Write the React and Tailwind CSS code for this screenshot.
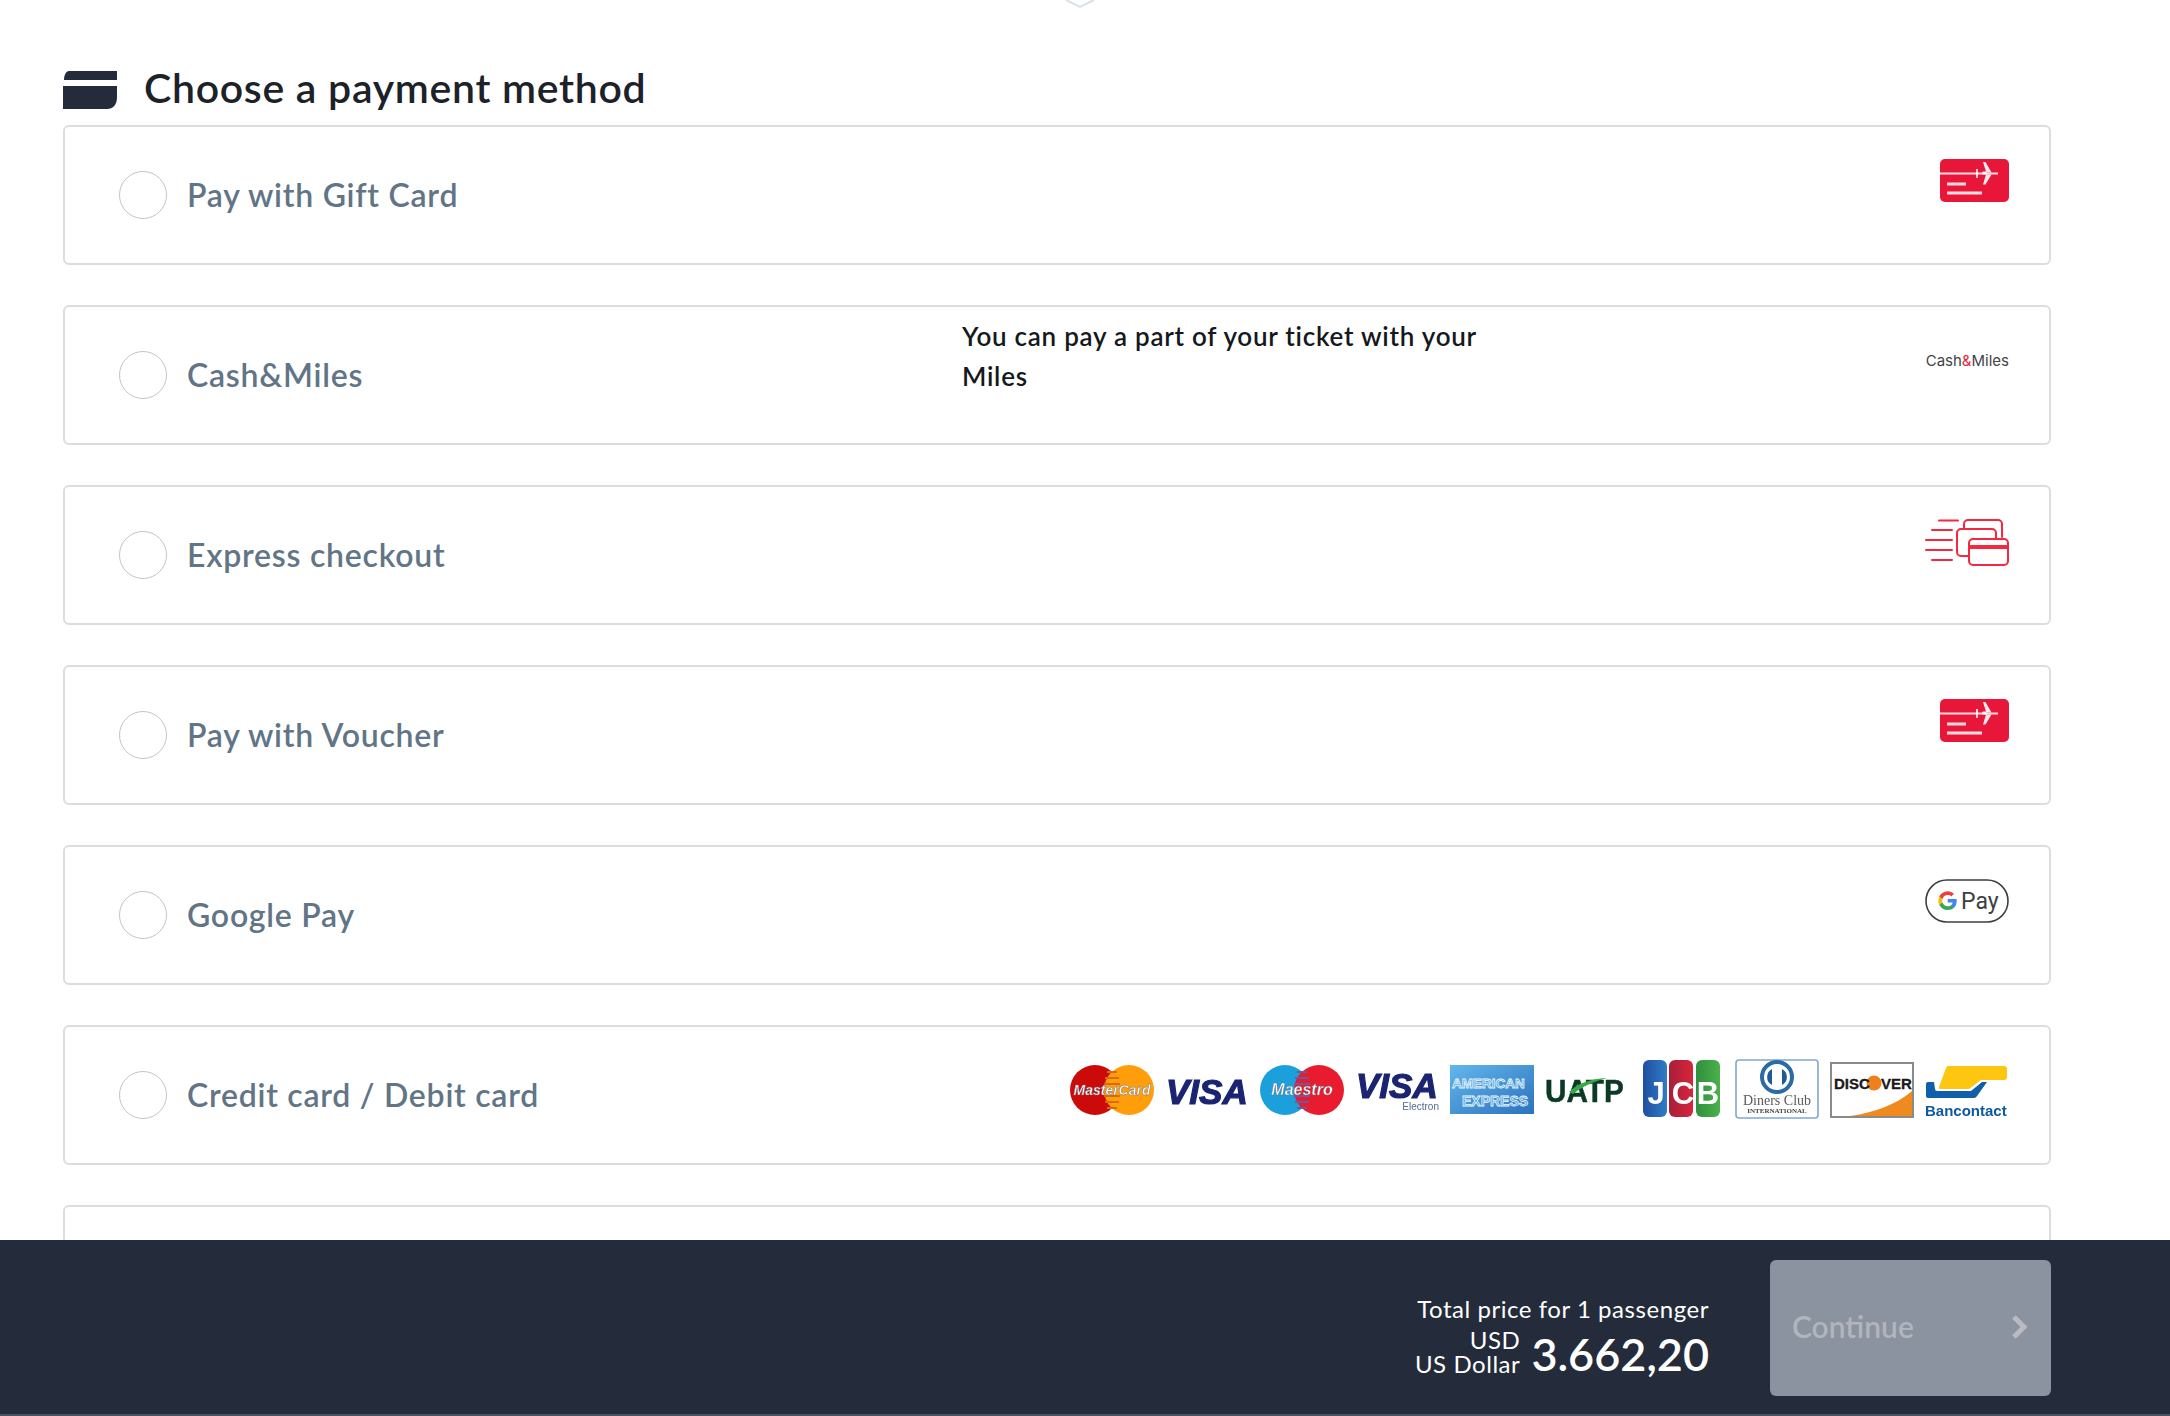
const sans = "font-['Lato','Open_Sans',sans-serif]"

const GiftIcon = () => (
  <svg width="69" height="43" viewBox="0 0 69 43" className="block blur-[0.3px]">
    <rect width="69" height="43" rx="5" fill="#e8173a" />
    <path d="M0 14.5h58" stroke="#fff" strokeOpacity=".85" strokeWidth="2" />
    <path d="M43 3h2.5l6 10.5h-5V15.500h5l-6 10H43l3-10h-3l-1-1v-1l1-1h3z" fill="#fff" fillOpacity=".9" />
    <path d="M37 10v9" stroke="#fff" strokeOpacity=".8" strokeWidth="2" />
    <path d="M7 25h19M7 34h35" stroke="#fff" strokeOpacity=".85" strokeWidth="3" />
  </svg>
)

const ExpressIcon = () => (
  <svg width="84" height="47" viewBox="0 0 84 47" className="block" fill="none" stroke="#f5283f" strokeWidth="2" strokeLinecap="round">
    <path d="M14 1.500h19M7 11h20M1 21h26M1 31h26M7 41h20" />
    <path d="M39 9V5a4 4 0 0 1 4-4h30a4 4 0 0 1 4 4v13" />
    <path d="M43 37h-7a4 4 0 0 1-4-4V14a4 4 0 0 1 4-4h31a4 4 0 0 1 4 4v5" />
    <rect x="44" y="20" width="39" height="26" rx="4" />
    <path d="M44 28h39" strokeWidth="4" strokeLinecap="butt" />
  </svg>
)

const GooglePayIcon = () => (
  <svg width="84" height="44" viewBox="0 0 84 44" className="block">
    <rect x="1" y="1" width="82" height="42" rx="21" fill="#fff" stroke="#3c4043" strokeWidth="1.6" />
    <g transform="translate(12.5 11.5) scale(.85)">
      <path fill="#4285F4" d="M22.56 12.25c0-.78-.07-1.53-.2-2.25H12v4.26h5.92c-.26 1.37-1.04 2.53-2.21 3.31v2.77h3.57c2.08-1.92 3.28-4.74 3.28-8.09z" />
      <path fill="#34A853" d="M12 23c2.97 0 5.46-.98 7.28-2.66l-3.57-2.77c-.98.66-2.23 1.06-3.71 1.06-2.86 0-5.29-1.93-6.16-4.53H2.18v2.84C3.99 20.53 7.7 23 12 23z" />
      <path fill="#FBBC05" d="M5.84 14.09c-.22-.66-.35-1.36-.35-2.09s.13-1.43.35-2.09V7.07H2.18C1.43 8.55 1 10.22 1 12s.43 3.45 1.18 4.93l2.85-2.22.81-.62z" />
      <path fill="#EA4335" d="M12 5.38c1.62 0 3.06.56 4.21 1.64l3.15-3.15C17.45 2.09 14.97 1 12 1 7.7 1 3.99 3.47 2.18 7.07l3.66 2.84c.87-2.6 3.3-4.53 6.16-4.53z" />
    </g>
    <text x="36" y="30" fontSize="23" fill="#3c4043" fontFamily="Roboto, sans-serif">Pay</text>
  </svg>
)

const logoFont = "Liberation Sans, sans-serif"

const Circles = ({ left, right, label, stripe, size }) => (
  <svg width="84" height="60" viewBox="0 0 84 60" className="block">
    <circle cx="25" cy="31" r="25" fill={left} />
    <circle cx="59" cy="31" r="25" fill={right} />
    <path d="M37 13h10M35 19h14M34 25h16M34 37h16M35 43h14M37 49h10" stroke={stripe} strokeWidth="2" />
    <text x="42" y="36" textAnchor="middle" fontSize={size} fontWeight="700" fontStyle="italic" fill="#fff" stroke="#6b6b7a" strokeWidth=".4" fontFamily={logoFont}>{label}</text>
  </svg>
)

const VisaLogo = () => (
  <svg width="84" height="60" viewBox="0 0 84 60" className="block">
    <text x="1" y="45" fontSize="35" fontWeight="700" fontStyle="italic" fill="#1b2471" stroke="#1b2471" strokeWidth="1.2" fontFamily={logoFont}>VISA</text>
  </svg>
)

const VisaElectronLogo = () => (
  <svg width="84" height="60" viewBox="0 0 84 60" className="block">
    <text x="1" y="39" fontSize="35" fontWeight="700" fontStyle="italic" fill="#1b2471" stroke="#1b2471" strokeWidth="1.2" fontFamily={logoFont}>VISA</text>
    <text x="84" y="51" textAnchor="end" fontSize="10" fill="#5a6a90" fontFamily={logoFont}>Electron</text>
  </svg>
)

const AmexLogo = () => (
  <svg width="84" height="60" viewBox="0 0 84 60" className="block">
    <defs>
      <linearGradient id="amex" x1="0" y1="0" x2="1" y2="1">
        <stop offset="0" stopColor="#63b7ec" />
        <stop offset="1" stopColor="#2b72bd" />
      </linearGradient>
    </defs>
    <rect y="6" width="84" height="49" fill="url(#amex)" />
    <text x="2" y="29" fontSize="13.500" fontWeight="700" fill="#4d9fdc" stroke="#eaf6fe" strokeWidth=".8" fontFamily={logoFont}>AMERICAN</text>
    <text x="12" y="47" fontSize="14" fontWeight="700" fill="#4d9fdc" stroke="#eaf6fe" strokeWidth=".8" fontFamily={logoFont}>EXPRESS</text>
  </svg>
)

const UatpLogo = () => (
  <svg width="84" height="60" viewBox="0 0 84 60" className="block">
    <g transform="translate(0 43) scale(.93 1)">
      <text x="0" y="0" fontSize="32" fontWeight="700" fill="#0b3a24" stroke="#0b3a24" strokeWidth=".5" fontFamily={logoFont}>UATP</text>
    </g>
    <path d="M24 33C32 25 44 20 62 19C48 23 38 27 28 35z" fill="#37a84a" />
  </svg>
)

const JcbLogo = () => (
  <svg width="84" height="60" viewBox="0 0 84 60" className="block">
    <defs>
      <linearGradient id="jb" x1="0" y1="0" x2="1" y2="0"><stop offset="0" stopColor="#1f4fa0" /><stop offset="1" stopColor="#2f7cc4" /></linearGradient>
      <linearGradient id="jr" x1="0" y1="0" x2="1" y2="0"><stop offset="0" stopColor="#a81e3c" /><stop offset="1" stopColor="#d8263a" /></linearGradient>
      <linearGradient id="jg" x1="0" y1="0" x2="1" y2="0"><stop offset="0" stopColor="#2f8f3e" /><stop offset="1" stopColor="#4cb04a" /></linearGradient>
    </defs>
    <rect x="3" y="1" width="24" height="57" rx="6" fill="url(#jb)" />
    <rect x="29" y="1" width="24" height="57" rx="6" fill="url(#jr)" />
    <rect x="56" y="1" width="24" height="57" rx="6" fill="url(#jg)" />
    <g fontSize="31" fontWeight="700" fill="#fff" fontFamily={logoFont} textAnchor="middle">
      <text x="16" y="45">J</text>
      <text x="43" y="45">C</text>
      <text x="68" y="45">B</text>
    </g>
  </svg>
)

const DinersLogo = () => (
  <svg width="84" height="60" viewBox="0 0 84 60" className="block">
    <rect x="1" y="1" width="82" height="58" rx="3" fill="#fff" stroke="#7fa9cf" strokeWidth="1.6" />
    <circle cx="42" cy="18" r="15" fill="#fff" stroke="#2a6aa6" strokeWidth="4" />
    <path d="M37 10a9 9 0 0 0 0 16zM47 10a9 9 0 0 1 0 16z" fill="#1d5c98" />
    <text x="42" y="46" textAnchor="middle" fontSize="14" fill="#5a5a5a" fontFamily="Liberation Serif, serif">Diners Club</text>
    <text x="42" y="54" textAnchor="middle" fontSize="7" fontWeight="700" fill="#444" fontFamily="Liberation Serif, serif">INTERNATIONAL</text>
  </svg>
)

const DiscoverLogo = () => (
  <svg width="84" height="60" viewBox="0 0 84 60" className="block">
    <rect x="1" y="4" width="82" height="54" fill="#fff" stroke="#8a8a8a" strokeWidth="2" />
    <path d="M20 57H82V32C66 46 42 54 20 57z" fill="#ef8a1f" />
    <circle cx="44" cy="24" r="7.500" fill="#f0801e" />
    <text x="4" y="30" fontSize="15" fontWeight="700" fill="#1a1a1a" stroke="#1a1a1a" strokeWidth=".3" fontFamily={logoFont}>DISC</text>
    <text x="51" y="30" fontSize="15" fontWeight="700" fill="#1a1a1a" stroke="#1a1a1a" strokeWidth=".3" fontFamily={logoFont}>VER</text>
  </svg>
)

const BancontactLogo = () => (
  <svg width="84" height="60" viewBox="0 0 84 60" className="block">
    <path d="M23 7H79q3 0 3 3V18q0 3-3 3H56L44 30H16q-3 0-2-2L21 9q1-2 2-2z" fill="#fdc611" />
    <path d="M1 25q0-2 2-2H9L10 30q0 2 2 2H46L57 23H62L52 37q-1 2-3 2H3q-2 0-2-2z" fill="#0f5ea8" />
    <text x="0" y="57" fontSize="15" fontWeight="700" fill="#0d5aa0" fontFamily={logoFont}>Bancontact</text>
  </svg>
)

const CardLogos = () => (
  <div className="flex gap-[11px] blur-[0.4px]">
    <Circles left="#cc0a0a" right="#ff9d0a" stripe="#d96a0a" label="MasterCard" size="14" />
    <VisaLogo />
    <Circles left="#1ba0dc" right="#e81c2e" stripe="#6a5aa0" label="Maestro" size="16" />
    <VisaElectronLogo />
    <AmexLogo />
    <UatpLogo />
    <JcbLogo />
    <DinersLogo />
    <DiscoverLogo />
    <BancontactLogo />
  </div>
)

const methods = [
  { label: "Pay with Gift Card", logo: <GiftIcon /> },
  {
    label: "Cash&Miles",
    note: "You can pay a part of your ticket with your Miles",
    logo: (
      <p className="mt-[12px] text-[15px] leading-[20px] text-[#444] font-['Inter',sans-serif]">
        Cash<span className="text-[#e8283a]">&amp;</span>Miles
      </p>
    ),
  },
  { label: "Express checkout", logo: <ExpressIcon /> },
  { label: "Pay with Voucher", logo: <GiftIcon /> },
  { label: "Google Pay", logo: <GooglePayIcon /> },
  { label: "Credit card / Debit card", logo: <CardLogos /> },
  { label: "" },
]

const MethodRow = ({ label, note, logo }) => (
  <div className="h-[140px] shrink-0 rounded-md border-2 border-[#dddddd] bg-white flex items-center pl-[54px] pr-[40px]">
    <span className="w-[48px] h-[48px] shrink-0 rounded-full border border-[#c4c4c4]" />
    <span className="ml-[20px] w-[775px] shrink-0 text-[32px] tracking-[0.75px] font-semibold text-[#617587]">{label}</span>
    {note && <p className="w-[530px] mb-[38px] text-[26px] tracking-[0.75px] leading-[40px] font-semibold text-[#15181d]">{note}</p>}
    <div className="ml-auto self-start pt-[32px]">{logo}</div>
  </div>
)

export default function App() {
  return (
    <div className={`h-[1416px] w-[2170px] overflow-hidden flex flex-col bg-white ${sans}`}>
      <main className="h-[1240px] shrink-0 overflow-hidden pl-[63px] pr-[119px]">
        <div className="flex justify-center h-[64px] pl-[46px]">
          <svg width="32" height="9" viewBox="0 0 32 9" className="block">
            <path d="M2 0l14 7L30 0" fill="none" stroke="#d9e1ea" strokeWidth="2" />
          </svg>
        </div>
        <div className="flex items-center h-[61px] pb-[9px]">
          <svg width="54" height="38" viewBox="0 0 54 38" className="block shrink-0">
            <path d="M6 0H54V9H1C1 4 3 0 6 0z" fill="#242b3a" />
            <path d="M0 15H54V26C54 34 50 38 44 38H0z" fill="#242b3a" />
          </svg>
          <h1 className="ml-[27px] mb-[5px] text-[41px] tracking-[0.7px] leading-none font-semibold text-[#1d2129]">Choose a payment method</h1>
        </div>
        <div className="flex flex-col gap-[40px]">
          {methods.map((m, i) => (
            <MethodRow key={i} {...m} />
          ))}
        </div>
      </main>
      <footer className="h-[174px] shrink-0 bg-[#242b3a] flex justify-end items-start pt-[20px] pr-[119px]">
        <div className="mt-[34px] flex flex-col items-end text-white tracking-[0.55px]">
          <p className="text-[24px] leading-[30px]">Total price for 1 passenger</p>
          <div className="mt-[4px] flex items-start gap-[11px]">
            <p className="text-right text-[24px] leading-[24px]">USD<br />US Dollar</p>
            <p className="mt-[1px] text-[45px] leading-[50px] tracking-normal font-semibold">3.662,20</p>
          </div>
        </div>
        <button className="ml-[61px] w-[281px] h-[136px] rounded-md bg-[#8b92a0] flex items-center justify-between pl-[22px] pr-[24px] pb-[3px] text-[#b1b5bd]">
          <span className="text-[30px] font-semibold">Continue</span>
          <svg width="16" height="24" viewBox="0 0 16 24" className="block">
            <path d="M3 2l10 10L3 22" fill="none" stroke="#b8bbc3" strokeWidth="5" />
          </svg>
        </button>
      </footer>
      <div className="h-[2px] bg-[#4a5160]" />
    </div>
  )
}
